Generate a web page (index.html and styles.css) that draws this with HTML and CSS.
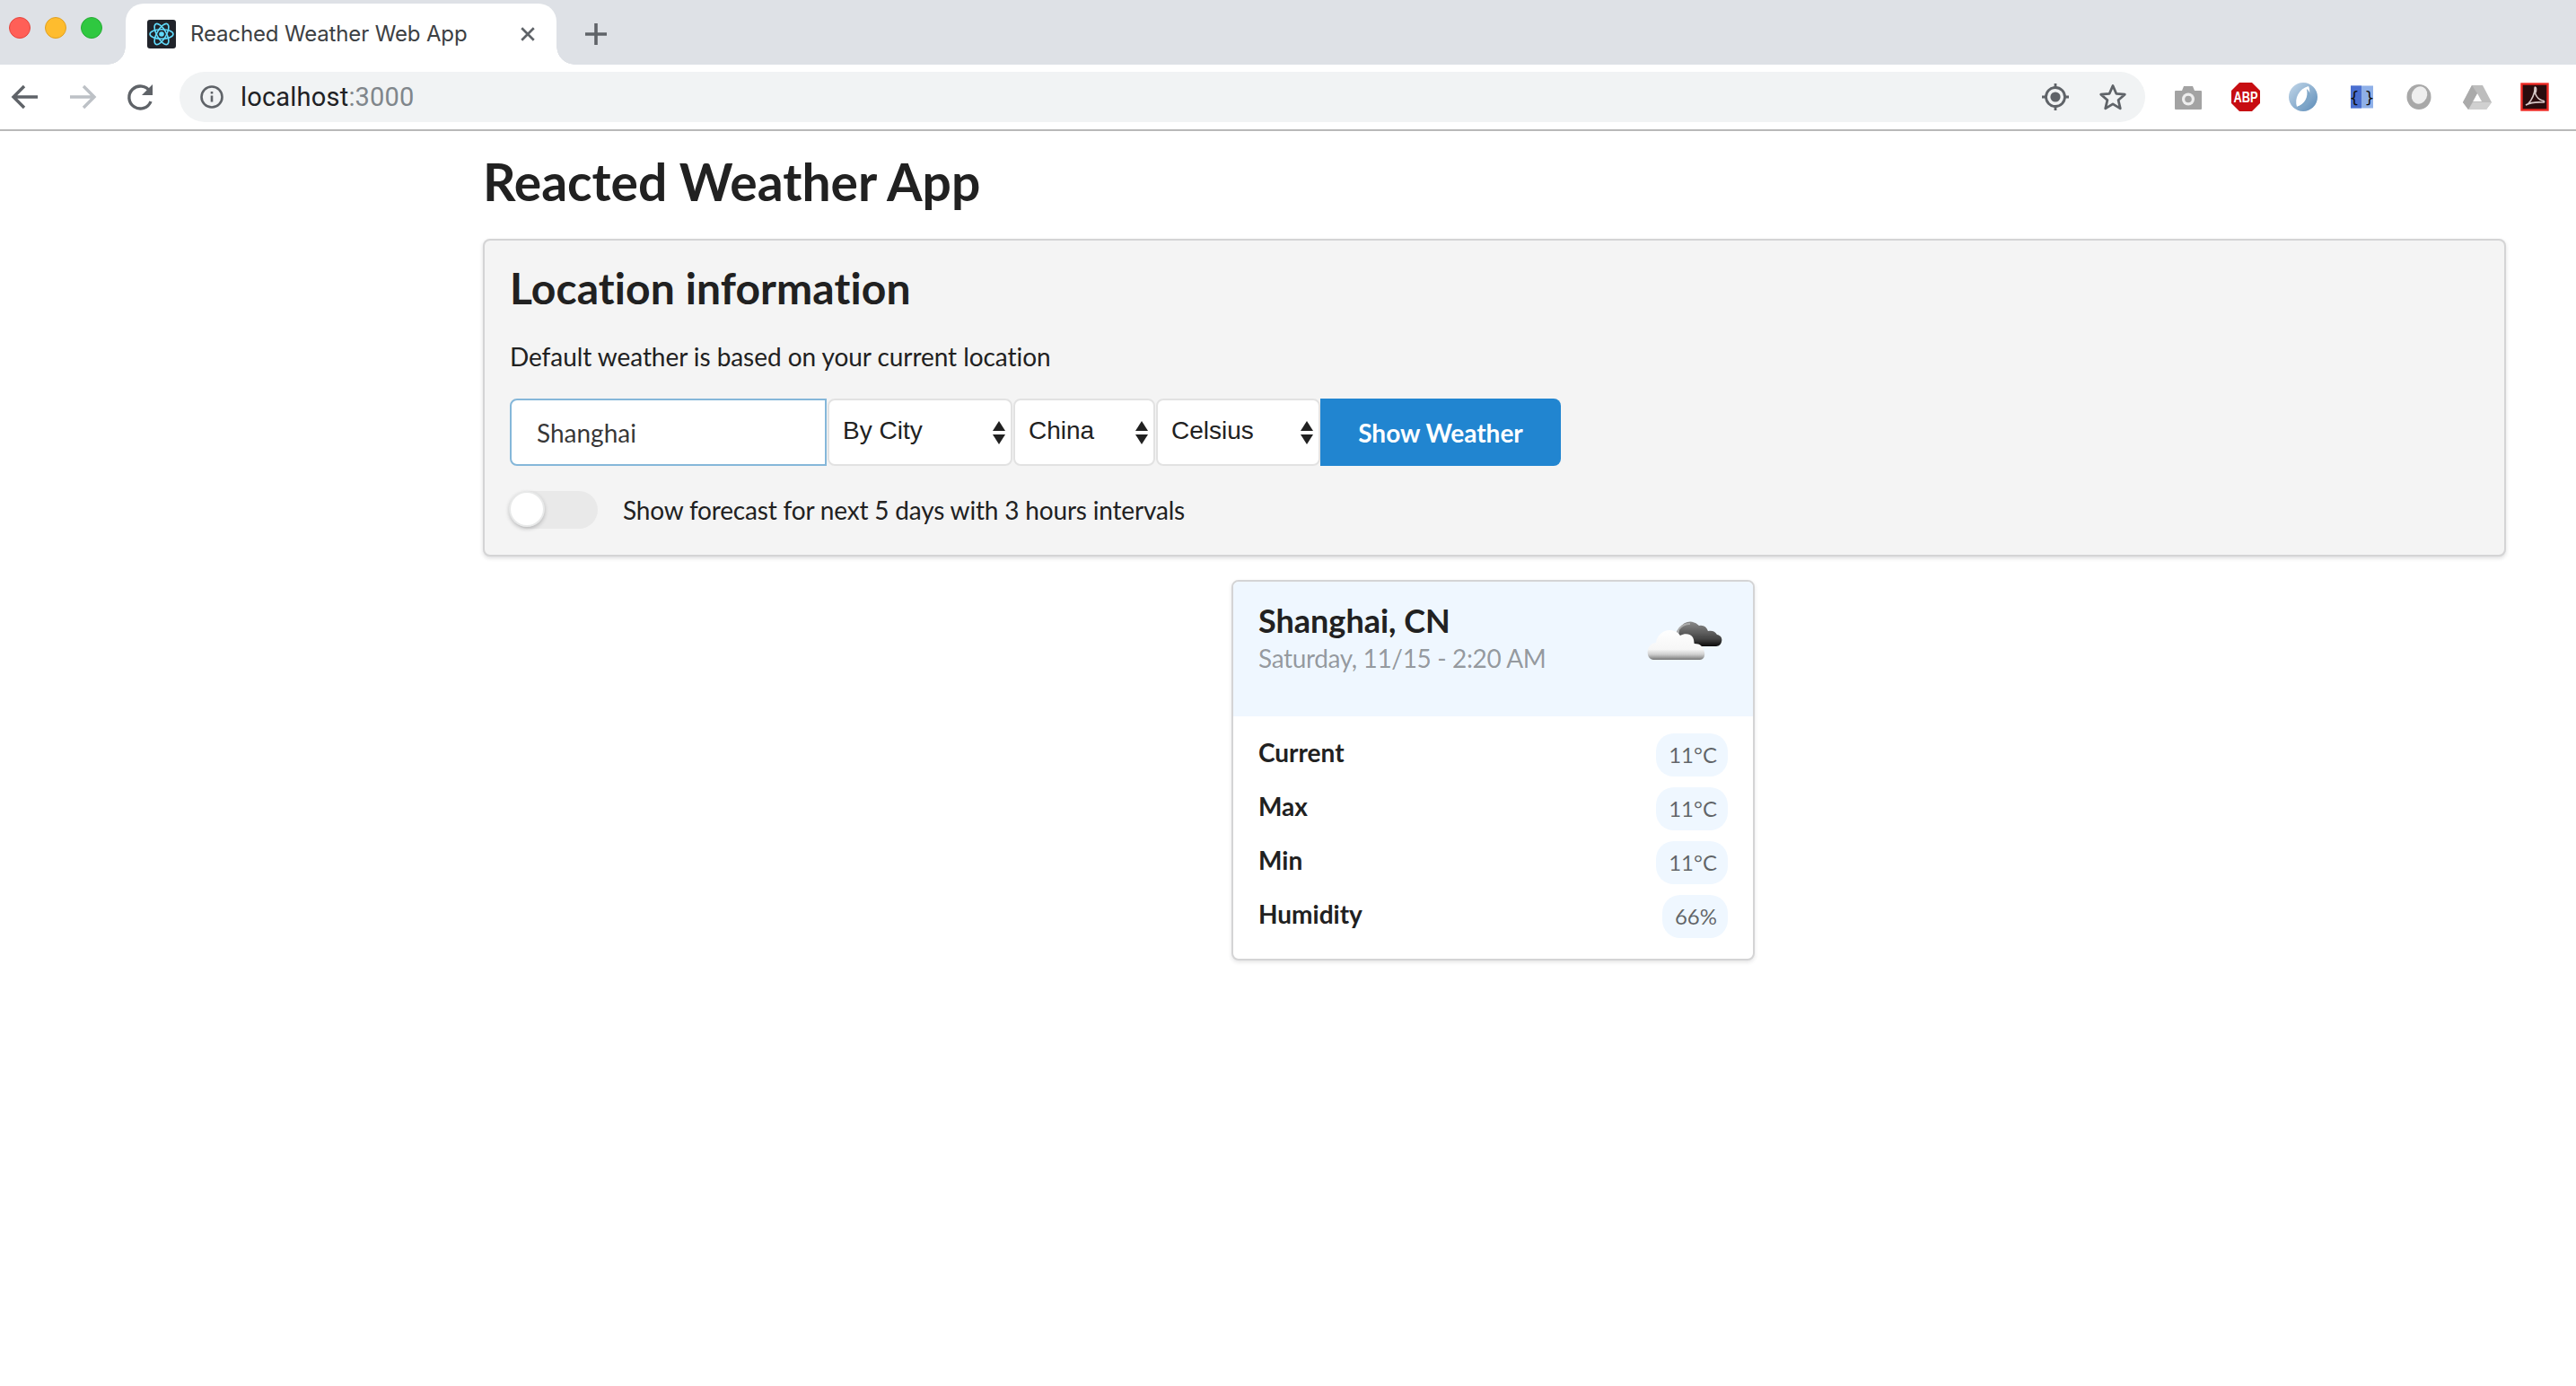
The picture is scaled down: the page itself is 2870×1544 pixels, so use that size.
FILE: index.html
```html
<!DOCTYPE html>
<html lang="en">
 <head>
  <meta charset="utf-8">
  <title>Reached Weather Web App</title>
  <link rel="stylesheet" href="styles.css">
 </head>
 <body>
  <div class="tabstrip">
   <div class="lights">
    <span class="light red"></span>
    <span class="light yellow"></span>
    <span class="light green"></span>
   </div>
   <div class="tab">
    <svg class="favicon" viewBox="0 0 32 32">
     <rect width="32" height="32" rx="3" fill="#20232a"/>
     <g fill="none" stroke="#61dafb" stroke-width="1.6">
      <ellipse cx="16" cy="16" rx="13" ry="5.2"/>
      <ellipse cx="16" cy="16" rx="13" ry="5.2" transform="rotate(60 16 16)"/>
      <ellipse cx="16" cy="16" rx="13" ry="5.2" transform="rotate(120 16 16)"/>
     </g>
     <circle cx="16" cy="16" r="2.8" fill="#61dafb"/>
    </svg>
    <span class="tabtitle">Reached Weather Web App</span>
    <svg class="tabclose" viewBox="0 0 16 16"><path d="M2 2l12 12M14 2L2 14" stroke="#5f6368" stroke-width="2.4" fill="none"/></svg>
   </div>
   <svg class="newtab" viewBox="0 0 24 24"><path d="M12 0v24M0 12h24" stroke="#5f6368" stroke-width="3.6" fill="none"/></svg>
  </div>

  <div class="toolbar">
   <svg class="tool" viewBox="0 0 40 40"><path d="M34 20H8M19 8L7 20l12 12" stroke="#5f6368" stroke-width="3.4" fill="none"/></svg>
   <svg class="tool" viewBox="0 0 40 40"><path d="M6 20h26M21 8l12 12-12 12" stroke="#bdc1c6" stroke-width="3.4" fill="none"/></svg>
   <svg class="tool" viewBox="0 0 40 40"><path d="M32 25a12.5 12.5 0 1 1-1-11" stroke="#5f6368" stroke-width="3.4" fill="none"/><path d="M34 6v12H22z" fill="#5f6368"/></svg>
   <div class="omnibox">
    <svg class="infoicon" viewBox="0 0 28 28"><circle cx="14" cy="14" r="11.5" stroke="#5f6368" stroke-width="2.6" fill="none"/><path d="M14 12.5v7M14 8v2.6" stroke="#5f6368" stroke-width="2.6" fill="none"/></svg>
    <span class="url">localhost<span class="port">:3000</span></span>
    <svg class="omniicon" viewBox="0 0 32 32"><circle cx="16" cy="16" r="10.5" stroke="#5f6368" stroke-width="2.8" fill="none"/><circle cx="16" cy="16" r="5.6" fill="#5f6368"/><path d="M16 1v5M16 26v5M1 16h5M26 16h5" stroke="#5f6368" stroke-width="2.8"/></svg>
    <svg class="omniicon" viewBox="0 0 32 32"><path d="M16 3.5l3.8 8.8 9.5.9-7.2 6.3 2.2 9.4-8.3-5-8.3 5 2.2-9.4-7.2-6.3 9.5-.9z" stroke="#5f6368" stroke-width="2.8" stroke-linejoin="round" fill="none"/></svg>
   </div>
   <div class="extensions">
    <svg class="ext" viewBox="0 0 40 40"><path d="M6 13h7l2-5h10l2 5h7a1 1 0 0 1 1 1v19a1 1 0 0 1-1 1H6a1 1 0 0 1-1-1V14a1 1 0 0 1 1-1z" fill="#a3a3a3"/><circle cx="20" cy="22.5" r="7" fill="#eee"/><circle cx="20" cy="22.5" r="3.8" fill="#a3a3a3"/></svg>
    <svg class="ext" viewBox="0 0 40 40"><path d="M13 4h14l9 9v14l-9 9H13l-9-9V13z" fill="#c70d12"/><text class="abp" transform="translate(20 26) scale(.8 1)" text-anchor="middle">ABP</text></svg>
    <svg class="ext" viewBox="0 0 40 40">
     <defs><linearGradient id="jring" x1="0" y1="0" x2="1" y2="1"><stop offset="0" stop-color="#c4d8ea"/><stop offset="1" stop-color="#5c8cb8"/></linearGradient></defs>
     <circle cx="20" cy="20" r="16" fill="url(#jring)"/>
     <path d="M13 31c-3-9 2-20 13-23 3 7 1 18-13 23z" fill="#fff"/>
     <path d="M13 31c9-3 13-11 11-20 6 5 5 15-2 19-3 2-6 2-9 1z" fill="#7ea6c8"/>
    </svg>
    <svg class="ext" viewBox="0 0 40 40">
     <rect x="8" y="7.5" width="25" height="25" fill="#8fb0e8"/><rect x="8" y="7.5" width="12" height="25" fill="#4a6fd0"/>
     <text class="braces" x="20.5" y="27" text-anchor="middle">{ }</text>
    </svg>
    <svg class="ext" viewBox="0 0 40 40"><ellipse cx="20" cy="20" rx="13.5" ry="14" fill="#a8a8a8"/><ellipse cx="20.5" cy="18" rx="8.5" ry="10" fill="#eee" transform="rotate(25 20.5 18)"/></svg>
    <svg class="ext" viewBox="0 0 40 40"><path d="M14 7h12l10 19-6 8H10l-6-8z" fill="#bdbdbd"/><path d="M20 16l5 9H15z" fill="#fff"/><path d="M10 34l5-8h21l-6 8z" fill="#d0d0d0"/><path d="M14 7L4 26l6 8 10-18z" fill="#aaa"/></svg>
    <svg class="ext" viewBox="0 0 40 40">
     <rect x="5.5" y="5.5" width="29" height="29" fill="#2a0c0e" stroke="#ee2a24" stroke-width="2.4"/>
     <path d="M10 29c4-1 8-8 9.500-14 1-4 0-6 1-6s2 3 0 7c2 5 4 7 8 8 2 0 3 2 1 2-5 0-12-1-19.500 3z" fill="none" stroke="#d8c8c8" stroke-width="1.6"/>
    </svg>
   </div>
  </div>

  <main class="page">
   <h1 class="pagetitle">Reacted Weather App</h1>

   <section class="segment">
    <h2 class="segtitle">Location information</h2>
    <p class="hint">Default weather is based on your current location</p>
    <form class="controls">
     <input class="cityinput" type="text" value="Shanghai">
     <label class="pick pick-mode"><select><option>By City</option></select></label>
     <label class="pick pick-country"><select><option>China</option></select></label>
     <label class="pick pick-unit"><select><option>Celsius</option></select></label>
     <button class="showbtn" type="button">Show Weather</button>
    </form>
    <div class="forecast">
     <span class="toggle"><span class="knob"></span></span>
     <span class="forecastlabel">Show forecast for next 5 days with 3 hours intervals</span>
    </div>
   </section>

   <article class="card">
    <header class="cardhead">
     <div>
      <div class="city">Shanghai, CN</div>
      <div class="when">Saturday, 11/15 - 2:20 AM</div>
     </div>
     <svg class="cloud" viewBox="0 0 84 46">
      <defs>
       <linearGradient id="darkcloud" x1="0" y1="0" x2="0" y2="1"><stop offset="0" stop-color="#8a8a8a"/><stop offset=".7" stop-color="#444"/><stop offset="1" stop-color="#0c0c0c"/></linearGradient>
       <linearGradient id="whitecloud" x1="0" y1="0" x2="0" y2="1"><stop offset="0" stop-color="#fff"/><stop offset=".65" stop-color="#f6f6f6"/><stop offset=".82" stop-color="#cfcfcf"/><stop offset="1" stop-color="#777"/></linearGradient>
       <filter id="soft"><feGaussianBlur stdDeviation=".7"/></filter>
      </defs>
      <g filter="url(#soft)">
       <path d="M36 18a13 13 0 0 1 22-13c5-1 8 1 10 6 4-1 8 0 10 4 5 1 6 5 5 8-1 4-4 5-7 5H46z" fill="url(#darkcloud)"/>
       <path d="M33 17a14 14 0 0 1 15-14" fill="none" stroke="#aaa" stroke-width="2"/>
       <path d="M7 43C1 42 0 36 1 32c1-5 5-8 9-8 1-9 9-15 17-14 5 1 8 3 10 6 5-3 12-2 14 2 2 4 1 7 2 7 6 0 10 3 11 10 1 5-2 8-5 8z" fill="url(#whitecloud)"/>
      </g>
     </svg>
    </header>
    <div class="cardbody">
     <div class="row"><span class="rowlabel">Current</span><span class="badge">11°C</span></div>
     <div class="row"><span class="rowlabel">Max</span><span class="badge">11°C</span></div>
     <div class="row"><span class="rowlabel">Min</span><span class="badge">11°C</span></div>
     <div class="row"><span class="rowlabel">Humidity</span><span class="badge">66%</span></div>
    </div>
   </article>
  </main>
 </body>
</html>
```

FILE: styles.css
```css
* {
 box-sizing: border-box;
}

html, body {
 margin: 0;
 padding: 0;
 background: #fff;
}

body {
 font-family: 'Lato', sans-serif;
 font-size: 28px;
 line-height: 40px;
 color: #212121;
 font-variant-ligatures: none;
 min-height: 1544px;
}

/* browser chrome */
.tabstrip {
 height: 72px;
 background: #dee1e6;
 display: flex;
 align-items: flex-end;
}

.lights {
 width: 140px;
 height: 72px;
 display: flex;
 gap: 16px;
 padding: 19px 0 0 10px;
}

.light {
 width: 24px;
 height: 24px;
 border-radius: 50%;
}

.red { background: #ff5f57; border: 1px solid #e5443c; }
.yellow { background: #febc2e; border: 1px solid #e0a020; }
.green { background: #2fc840; border: 1px solid #26ab34; }

.tab {
 position: relative;
 width: 480px;
 height: 68px;
 background: #fff;
 border-radius: 20px 20px 0 0;
 display: flex;
 align-items: center;
 padding: 0 23px 0 24px;
}

.tab::before, .tab::after {
 content: "";
 position: absolute;
 bottom: 0;
 width: 20px;
 height: 20px;
}

.tab::before {
 left: -20px;
 background: radial-gradient(circle at 0 0, transparent 19.5px, #fff 20px);
}

.tab::after {
 right: -20px;
 background: radial-gradient(circle at 100% 0, transparent 19.5px, #fff 20px);
}

.favicon {
 width: 32px;
 height: 32px;
 flex: none;
}

.tabtitle {
 flex: 1;
 margin-left: 16px;
 font-family: 'Inter', sans-serif;
 font-size: 24px;
 letter-spacing: -.15px;
 color: #3c4043;
 white-space: nowrap;
}

.tabclose {
 width: 18px;
 height: 18px;
 flex: none;
}

.newtab {
 width: 24px;
 height: 24px;
 margin: 0 0 22px 32px;
}

.toolbar {
 height: 74px;
 background: #fff;
 border-bottom: 2px solid #b9b9b9;
 display: flex;
 align-items: center;
 gap: 24px;
 padding-left: 8px;
}

.tool {
 width: 40px;
 height: 40px;
 flex: none;
}

.omnibox {
 flex: 1;
 height: 56px;
 background: #f1f3f4;
 border-radius: 28px;
 display: flex;
 align-items: center;
 padding: 0 20px 0 22px;
}

.infoicon {
 width: 28px;
 height: 28px;
 flex: none;
}

.url {
 flex: 1;
 margin-left: 18px;
 font-family: 'Roboto', sans-serif;
 font-size: 29px;
 letter-spacing: .2px;
 color: #202124;
}

.port {
 color: #80868b;
}

.omniicon {
 width: 32px;
 height: 32px;
 margin-left: 32px;
}

.extensions {
 display: flex;
 gap: 24.4px;
 padding: 0 26px 0 4px;
}

.ext {
 width: 40px;
 height: 40px;
 flex: none;
}

.abp {
 font-family: 'Liberation Sans', sans-serif;
 font-size: 16px;
 font-weight: 700;
 fill: #fff;
}

.braces {
 font-family: 'DejaVu Sans', sans-serif;
 font-size: 18px;
 fill: #111;
}

/* page */
.page {
 margin-left: 538px;
 width: 2254px;
 padding-top: 20px;
}

.pagetitle {
 margin: 0 0 28px;
 font-size: 57px;
 line-height: 72px;
 font-weight: 700;
}

.segment {
 height: 354px;
 background: #f4f4f4;
 border: 2px solid rgba(34,36,38,.15);
 border-radius: 8px;
 box-shadow: 0 2px 4px rgba(34,36,38,.15);
 padding: 25px 28px 28px;
}

.segtitle {
 margin: 0 0 28px;
 font-size: 48px;
 letter-spacing: .1px;
 line-height: 56px;
 font-weight: 700;
}

.hint {
 margin: 0 0 27px;
 letter-spacing: -.06px;
}

.controls {
 display: flex;
 height: 75px;
}

.cityinput {
 width: 353px;
 height: 75px;
 border: 2px solid #85b7d9;
 border-radius: 8px 0 0 8px;
 background: #fff;
 padding: 0 28px;
 font-family: 'Lato', sans-serif;
 font-size: 28px;
 color: rgba(0,0,0,.8);
 outline: none;
}

.pick {
 position: relative;
 display: block;
 height: 75px;
 margin-left: 1px;
}

.pick-mode { width: 206px; }
.pick-country { width: 158px; }
.pick-unit { width: 183px; }

.pick select {
 appearance: none;
 width: 100%;
 height: 100%;
 border: 2px solid #e2e2e2;
 border-radius: 8px;
 background: #fff;
 padding: 0 0 4px 15px;
 font-family: 'Liberation Sans', sans-serif;
 font-size: 28px;
 color: #212121;
 outline: none;
}

/* the two little arrows of the native select */
.pick::before, .pick::after {
 content: "";
 position: absolute;
 right: 8px;
 border-left: 7px solid transparent;
 border-right: 7px solid transparent;
 pointer-events: none;
}

.pick::before {
 top: 25px;
 border-bottom: 11px solid #212121;
}

.pick::after {
 top: 40px;
 border-top: 11px solid #212121;
}

.showbtn {
 width: 268px;
 height: 75px;
 margin: 0;
 border: 0;
 border-radius: 0 8px 8px 0;
 background: #2185d0;
 color: #fff;
 font-family: 'Lato', sans-serif;
 font-size: 28px;
 font-weight: 700;
}

.forecast {
 display: flex;
 align-items: center;
 gap: 28px;
 margin-top: 28px;
 height: 42px;
}

.forecastlabel {
 letter-spacing: -.18px;
}

.toggle {
 position: relative;
 width: 98px;
 height: 42px;
 border-radius: 21px;
 background: #e9e9e9;
 flex: none;
}

.knob {
 position: absolute;
 left: -1px;
 top: 0;
 width: 40px;
 height: 40px;
 border-radius: 50%;
 background: #fff;
 box-shadow: 0 2px 4px rgba(34,36,38,.25), 0 0 0 2px rgba(34,36,38,.1) inset;
}

/* weather card */
.card {
 width: 583px;
 height: 424px;
 margin: 26px 0 0 834px;
 background: #fff;
 border: 2px solid #d4d4d5;
 border-radius: 8px;
 box-shadow: 0 2px 4px rgba(34,36,38,.12);
 overflow: hidden;
}

.cardhead {
 height: 150px;
 background: #eff7ff;
 display: flex;
 justify-content: space-between;
 padding: 23px 34px 0 28px;
}

.city {
 font-size: 36px;
 line-height: 40px;
 font-weight: 700;
}

.when {
 margin-top: 2px;
 letter-spacing: -.36px;
 color: rgba(0,0,0,.4);
}

.cloud {
 width: 84px;
 height: 46px;
 margin-top: 21px;
}

.cardbody {
 padding: 19px 28px 0;
 display: flex;
 flex-direction: column;
 gap: 12px;
}

.row {
 display: flex;
 justify-content: space-between;
 height: 48px;
}

.rowlabel {
 font-weight: 700;
 line-height: 42px;
}

.badge {
 height: 48px;
 padding: 0 12px 0 14px;
 border-radius: 20px;
 background: #eff7ff;
 color: rgba(0,0,0,.6);
 font-size: 24px;
 line-height: 48px;
 white-space: nowrap;
}
```
